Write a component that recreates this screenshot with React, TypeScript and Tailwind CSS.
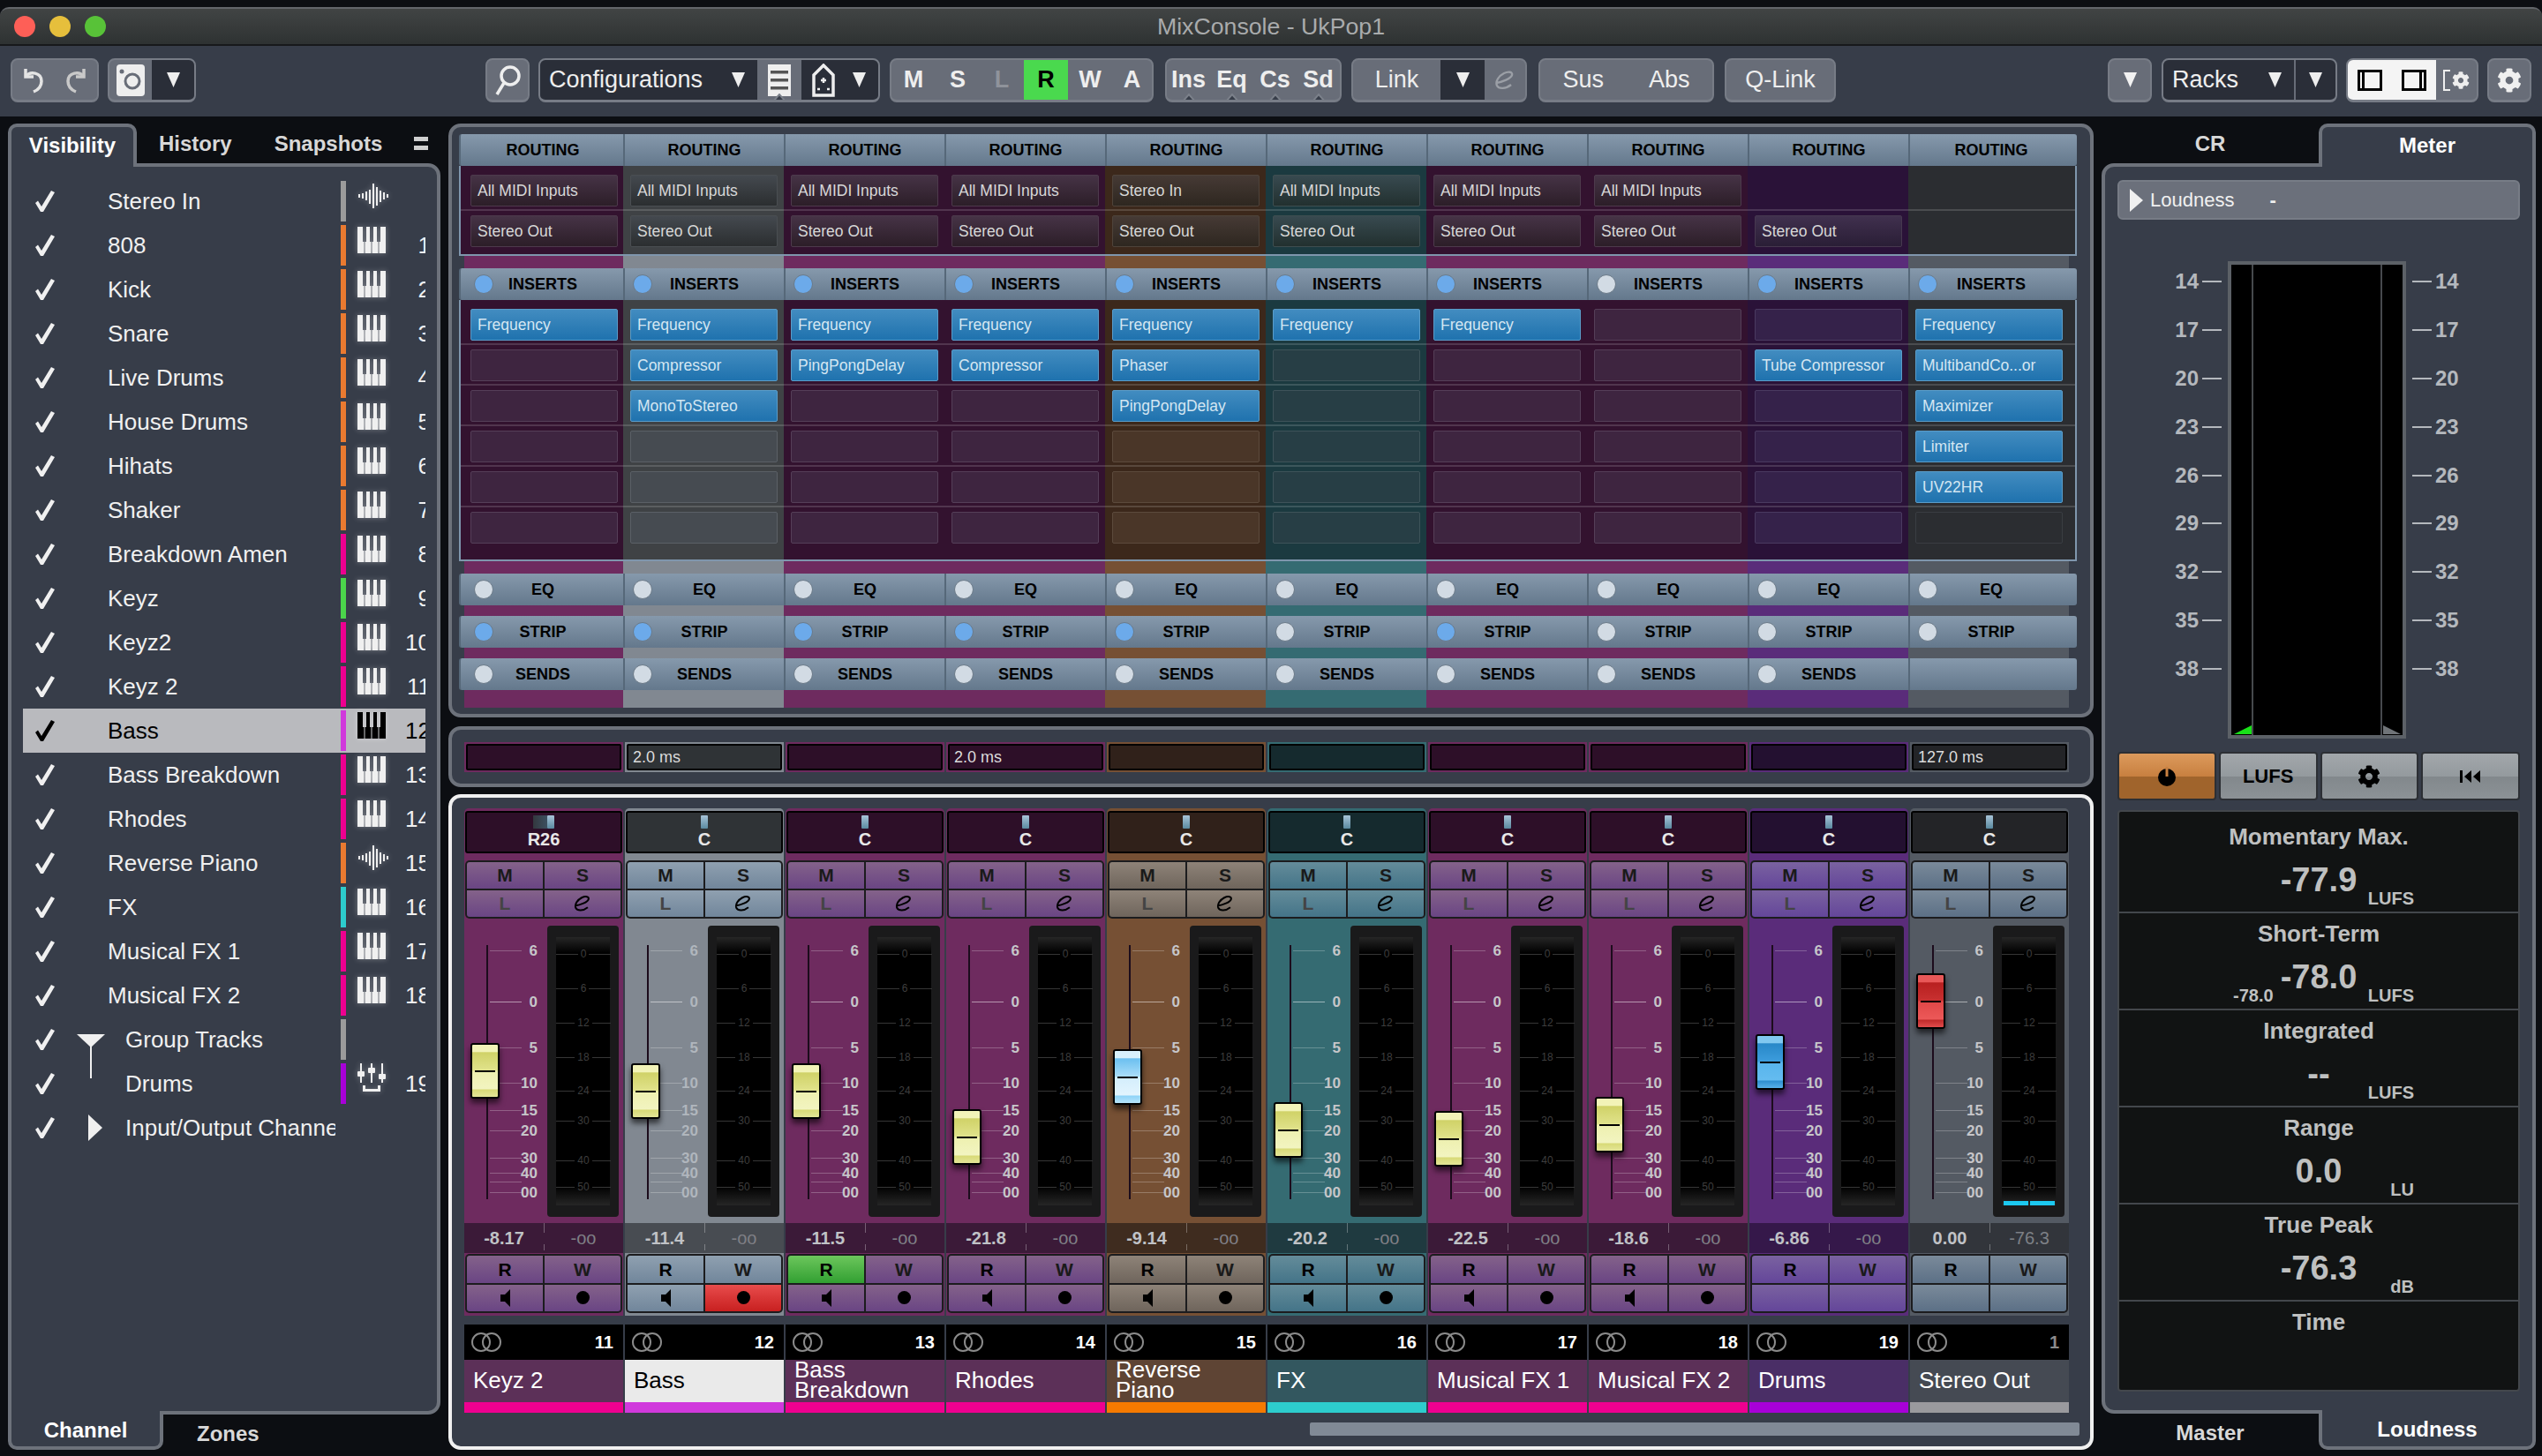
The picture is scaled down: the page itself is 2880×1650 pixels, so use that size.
import React from 'react';
import { FaCog } from 'react-icons/fa';

// Colour sets for the channel strips
interface Theme {
  bright: string;
  dark: string;
  box: string;
  val: string;
  name: string;
  btn: string;
  slot: string;
  routing: string;
  bar: string;
}

const pink: Theme = {
  bright: 'bg-[#6e2b5f]',
  dark: 'bg-[#33122f]',
  box: 'bg-[#2d0f28]',
  val: 'bg-[#3b1a38]',
  name: 'bg-[#5c3058] text-white',
  btn: 'bg-[linear-gradient(180deg,#84628a,#6a4584)]',
  slot: 'bg-[#3e2540] border-[#553f58]',
  routing: 'bg-[linear-gradient(180deg,#463346,#2c1e28)] border-[#4d3a4c]',
  bar: 'bg-[#ee0090]',
};
const selected: Theme = {
  bright: 'bg-[#818891]',
  dark: 'bg-[#3f4245]',
  box: 'bg-[#2f3336]',
  val: 'bg-[#484c52]',
  name: 'bg-[#eaeaea] text-black',
  btn: 'bg-[linear-gradient(180deg,#8fa0b0,#71869b)]',
  slot: 'bg-[#464b51] border-[#5b6066]',
  routing: 'bg-[linear-gradient(180deg,#44494f,#2b2e30)] border-[#4a4e52]',
  bar: 'bg-[#d039dc]',
};
const orange: Theme = {
  bright: 'bg-[#765034]',
  dark: 'bg-[#3c281b]',
  box: 'bg-[#30211a]',
  val: 'bg-[#3f2c1f]',
  name: 'bg-[#5e4434] text-white',
  btn: 'bg-[linear-gradient(180deg,#8e8378,#6f655c)]',
  slot: 'bg-[#4a3628] border-[#5c4a3c]',
  routing: 'bg-[linear-gradient(180deg,#463a35,#2e2720)] border-[#4e433a]',
  bar: 'bg-[#f57a00]',
};
const teal: Theme = {
  bright: 'bg-[#356b72]',
  dark: 'bg-[#1b3a40]',
  box: 'bg-[#152a2e]',
  val: 'bg-[#1f3a40]',
  name: 'bg-[#33575f] text-white',
  btn: 'bg-[linear-gradient(180deg,#648c9a,#447488)]',
  slot: 'bg-[#273e45] border-[#3e5359]',
  routing: 'bg-[linear-gradient(180deg,#384a50,#22302f)] border-[#3e4e50]',
  bar: 'bg-[#2dcdcd]',
};
const purple: Theme = {
  bright: 'bg-[#5a2c7a]',
  dark: 'bg-[#2a1238]',
  box: 'bg-[#231030]',
  val: 'bg-[#35184a]',
  name: 'bg-[#4a2e66] text-white',
  btn: 'bg-[linear-gradient(180deg,#7a62a0,#64469a)]',
  slot: 'bg-[#35224a] border-[#4a3a60]',
  routing: 'bg-[linear-gradient(180deg,#40304e,#2a1e36)] border-[#46384f]',
  bar: 'bg-[#a800d8]',
};
const slate: Theme = {
  bright: 'bg-[#545a63]',
  dark: 'bg-[#2b2d31]',
  box: 'bg-[#232427]',
  val: 'bg-[#32353b]',
  name: 'bg-[#454a53] text-white',
  btn: 'bg-[linear-gradient(180deg,#7a8a9a,#5c7086)]',
  slot: 'bg-[#2b2d31] border-[#3a3d42]',
  routing: 'bg-[linear-gradient(180deg,#3a3d42,#26282b)] border-[#3f4246]',
  bar: 'bg-[#9a9a9e]',
};

interface Channel {
  theme: Theme;
  name: string;
  num: number;
  pan: string;
  level: string;
  peak: string;
  capTop: number;
  cap: 'yellow' | 'ice' | 'blue' | 'red';
  input: string;
  output: string;
  inserts: string[];
  insertsOn: boolean;
  stripOn: boolean;
  latency: string;
}

const channels: Channel[] = [
  { theme: pink, name: 'Keyz 2', num: 11, pan: 'R26', level: '-8.17', peak: '-oo', capTop: 141, cap: 'yellow', input: 'All MIDI Inputs', output: 'Stereo Out', inserts: ['Frequency'], insertsOn: true, stripOn: true, latency: '' },
  { theme: selected, name: 'Bass', num: 12, pan: 'C', level: '-11.4', peak: '-oo', capTop: 164, cap: 'yellow', input: 'All MIDI Inputs', output: 'Stereo Out', inserts: ['Frequency', 'Compressor', 'MonoToStereo'], insertsOn: true, stripOn: true, latency: '2.0 ms' },
  { theme: pink, name: 'Bass Breakdown', num: 13, pan: 'C', level: '-11.5', peak: '-oo', capTop: 164, cap: 'yellow', input: 'All MIDI Inputs', output: 'Stereo Out', inserts: ['Frequency', 'PingPongDelay'], insertsOn: true, stripOn: true, latency: '' },
  { theme: pink, name: 'Rhodes', num: 14, pan: 'C', level: '-21.8', peak: '-oo', capTop: 216, cap: 'yellow', input: 'All MIDI Inputs', output: 'Stereo Out', inserts: ['Frequency', 'Compressor'], insertsOn: true, stripOn: true, latency: '2.0 ms' },
  { theme: orange, name: 'Reverse Piano', num: 15, pan: 'C', level: '-9.14', peak: '-oo', capTop: 148, cap: 'ice', input: 'Stereo In', output: 'Stereo Out', inserts: ['Frequency', 'Phaser', 'PingPongDelay'], insertsOn: true, stripOn: true, latency: '' },
  { theme: teal, name: 'FX', num: 16, pan: 'C', level: '-20.2', peak: '-oo', capTop: 208, cap: 'yellow', input: 'All MIDI Inputs', output: 'Stereo Out', inserts: ['Frequency'], insertsOn: true, stripOn: false, latency: '' },
  { theme: pink, name: 'Musical FX 1', num: 17, pan: 'C', level: '-22.5', peak: '-oo', capTop: 218, cap: 'yellow', input: 'All MIDI Inputs', output: 'Stereo Out', inserts: ['Frequency'], insertsOn: true, stripOn: true, latency: '' },
  { theme: pink, name: 'Musical FX 2', num: 18, pan: 'C', level: '-18.6', peak: '-oo', capTop: 202, cap: 'yellow', input: 'All MIDI Inputs', output: 'Stereo Out', inserts: [], insertsOn: false, stripOn: false, latency: '' },
  { theme: purple, name: 'Drums', num: 19, pan: 'C', level: '-6.86', peak: '-oo', capTop: 131, cap: 'blue', input: '', output: 'Stereo Out', inserts: ['', 'Tube Compressor'], insertsOn: true, stripOn: false, latency: '' },
  { theme: slate, name: 'Stereo Out', num: 1, pan: 'C', level: '0.00', peak: '-76.3', capTop: 62, cap: 'red', input: '', output: '', inserts: ['Frequency', 'MultibandCo...or', 'Maximizer', 'Limiter', 'UV22HR'], insertsOn: true, stripOn: false, latency: '127.0 ms' },
];

const capStyles = {
  yellow: 'bg-[linear-gradient(180deg,#f2f3b8_0%,#f2f3b8_13%,#d0d268_15%,#e0e28a_48%,#eef0b0_52%,#f2f4c0_84%,#d8da78_87%,#e4e698_100%)]',
  ice: 'bg-[linear-gradient(180deg,#d8f0fc_0%,#d8f0fc_13%,#6cc0f0_15%,#a8dcf8_48%,#d4eefc_52%,#e2f4fe_84%,#90d4f8_87%,#b8e4fa_100%)]',
  blue: 'bg-[linear-gradient(180deg,#80c8f0_0%,#80c8f0_13%,#2888c8_15%,#3c9cdc_48%,#58b4ec_52%,#64bcf0_84%,#3090d0_87%,#58b0e8_100%)]',
  red: 'bg-[linear-gradient(180deg,#e85858_0%,#e85858_13%,#b82020_15%,#c83030_48%,#e04848_52%,#ec5858_84%,#c02c2c_87%,#e04c4c_100%)]',
};

const faderScale = [
  { y: 36, label: '6' },
  { y: 94, label: '0' },
  { y: 146, label: '5' },
  { y: 186, label: '10' },
  { y: 217, label: '15' },
  { y: 240, label: '20' },
  { y: 271, label: '30' },
  { y: 288, label: '40' },
  { y: 298, label: '' },
  { y: 310, label: '00' },
];

const meterScale = [
  { y: 32, label: '0' },
  { y: 71, label: '6' },
  { y: 110, label: '12' },
  { y: 149, label: '18' },
  { y: 187, label: '24' },
  { y: 221, label: '30' },
  { y: 266, label: '40' },
  { y: 296, label: '50' },
];

type IconKind = 'wave' | 'piano' | 'mixer' | 'none';

interface ListRow {
  name: string;
  bar?: string;
  icon: IconKind;
  num?: string;
  depth?: number;
  tri?: 'open' | 'closed';
  active?: boolean;
}

const listRows: ListRow[] = [
  { name: 'Stereo In', bar: 'bg-[#9b9b9b]', icon: 'wave' },
  { name: '808', bar: 'bg-[#ea7a30]', icon: 'piano', num: '1' },
  { name: 'Kick', bar: 'bg-[#ea7a30]', icon: 'piano', num: '2' },
  { name: 'Snare', bar: 'bg-[#ea7a30]', icon: 'piano', num: '3' },
  { name: 'Live Drums', bar: 'bg-[#ea7a30]', icon: 'piano', num: '4' },
  { name: 'House Drums', bar: 'bg-[#ea7a30]', icon: 'piano', num: '5' },
  { name: 'Hihats', bar: 'bg-[#ea7a30]', icon: 'piano', num: '6' },
  { name: 'Shaker', bar: 'bg-[#ea7a30]', icon: 'piano', num: '7' },
  { name: 'Breakdown Amen', bar: 'bg-[#ee0090]', icon: 'piano', num: '8' },
  { name: 'Keyz', bar: 'bg-[#4bd44b]', icon: 'piano', num: '9' },
  { name: 'Keyz2', bar: 'bg-[#ee0090]', icon: 'piano', num: '10' },
  { name: 'Keyz 2', bar: 'bg-[#ee0090]', icon: 'piano', num: '11' },
  { name: 'Bass', bar: 'bg-[#d039dc]', icon: 'piano', num: '12', active: true },
  { name: 'Bass Breakdown', bar: 'bg-[#ee0090]', icon: 'piano', num: '13' },
  { name: 'Rhodes', bar: 'bg-[#ee0090]', icon: 'piano', num: '14' },
  { name: 'Reverse Piano', bar: 'bg-[#ea7a30]', icon: 'wave', num: '15' },
  { name: 'FX', bar: 'bg-[#2dcdcd]', icon: 'piano', num: '16' },
  { name: 'Musical FX 1', bar: 'bg-[#ee0090]', icon: 'piano', num: '17' },
  { name: 'Musical FX 2', bar: 'bg-[#ee0090]', icon: 'piano', num: '18' },
  { name: 'Group Tracks', bar: 'bg-[#9b9b9b]', icon: 'none', depth: 1, tri: 'open' },
  { name: 'Drums', bar: 'bg-[#a800d8]', icon: 'mixer', num: '19', depth: 1 },
  { name: 'Input/Output Channels', icon: 'none', depth: 1, tri: 'closed' },
];

// Icons
const TriDown = ({ className = 'text-[#eee]' }: { className?: string }) => (
  <svg className={className} width="15" height="17" viewBox="0 0 15 17" fill="currentColor">
    <polygon points="0,0 15,0 7.5,17" />
  </svg>
);

const EIcon = ({ className, w = 26, h = 22 }: { className?: string; w?: number; h?: number }) => (
  <svg className={className} width={w} height={h} viewBox="0 0 26 22" fill="none" stroke="currentColor" strokeWidth="2.4">
    <path d="M3 14 C10 13 20 9 21 5 C22 1.5 17 0.5 12 3 C6 6 2 12 4 17 C6 21 14 21 20 16" />
  </svg>
);

const Notch = () => (
  <svg className="absolute bottom-[-2px]" width="14" height="9" viewBox="0 0 14 9" fill="#373d49" stroke="#7b808a" strokeWidth="2">
    <polyline points="0,9 7,1 14,9" />
  </svg>
);

const PianoIcon = () => (
  <svg className="drop-shadow-[0_0_3px_rgba(255,255,255,0.35)]" width="32" height="30" viewBox="0 0 32 30" fill="currentColor">
    <rect x="0" y="0" width="6" height="17" />
    <rect x="10" y="0" width="4" height="17" />
    <rect x="18" y="0" width="4" height="17" />
    <rect x="26" y="0" width="6" height="17" />
    <rect x="0" y="17" width="7.5" height="13" />
    <rect x="8.5" y="17" width="7" height="13" />
    <rect x="16.5" y="17" width="7" height="13" />
    <rect x="24.5" y="17" width="7.5" height="13" />
  </svg>
);

const WaveIcon = () => (
  <svg className="drop-shadow-[0_0_3px_rgba(255,255,255,0.35)]" width="38" height="30" viewBox="0 0 38 30" stroke="currentColor" strokeWidth="2">
    <line x1="2" y1="13" x2="2" y2="17" />
    <line x1="6" y1="12" x2="6" y2="18" />
    <line x1="10" y1="10" x2="10" y2="20" />
    <line x1="14" y1="8" x2="14" y2="24" />
    <line x1="18" y1="1" x2="18" y2="29" />
    <line x1="22" y1="5" x2="22" y2="26" />
    <line x1="26" y1="9" x2="26" y2="22" />
    <line x1="30" y1="11" x2="30" y2="19" />
    <line x1="34" y1="13" x2="34" y2="17" />
  </svg>
);

const MixerIcon = () => (
  <svg className="drop-shadow-[0_0_3px_rgba(255,255,255,0.35)]" width="32" height="34" viewBox="0 0 32 34" fill="currentColor">
    <rect x="3" y="0" width="2" height="22" />
    <rect x="15" y="0" width="2" height="22" />
    <rect x="27" y="0" width="2" height="22" />
    <rect x="0" y="9" width="8" height="6" rx="1" />
    <rect x="12" y="5" width="8" height="6" rx="1" />
    <rect x="24" y="12" width="8" height="6" rx="1" />
    <path d="M6 25h3v4h14v-4h3v7H6z" />
  </svg>
);

const Check = ({ className }: { className: string }) => (
  <svg className={className} width="22" height="24" viewBox="0 0 22 24" fill="currentColor">
    <polygon points="0,14 3,11.5 7,18 18,0 22,2 9,24 6,24" />
  </svg>
);

const StereoCircles = () => (
  <svg width="36" height="24" viewBox="0 0 36 24" fill="none" stroke="#8b8b8b" strokeWidth="2">
    <circle cx="12" cy="12" r="10" />
    <circle cx="24" cy="12" r="10" />
  </svg>
);

const Speaker = () => (
  <svg width="11" height="20" viewBox="0 0 11 20" fill="#000">
    <polygon points="0,6 5,6 11,0 11,20 5,14 0,14" />
  </svg>
);

const RecDot = () => <div className="h-[15px] w-[15px] rounded-full bg-black" />;

// Toolbar pieces
const ToolGroup = ({ className = '', children }: { className?: string; children: React.ReactNode }) => (
  <div className={`flex h-[50px] overflow-hidden rounded-lg border-2 border-b-[3px] border-[#777c86] bg-[#686d78] text-[27px] text-[#eee] ${className}`}>
    {children}
  </div>
);

const ToolCell = ({ className = '', between, children }: { className?: string; between?: boolean; children?: React.ReactNode }) => (
  <div className={`relative flex h-full items-center ${between ? 'justify-between' : 'justify-center'} ${className}`}>{children}</div>
);

const TitleBar = () => (
  <div className="relative flex h-[44px] items-center justify-center rounded-t-[10px] border-t-2 border-b-2 border-t-[#63666a] border-b-[#17191b] bg-[linear-gradient(180deg,#414444,#2e3232)]">
    <div className="absolute left-[16px] flex gap-[16px]">
      <div className="h-[24px] w-[24px] rounded-full bg-[#fe5f57]" />
      <div className="h-[24px] w-[24px] rounded-full bg-[#e6bf3c]" />
      <div className="h-[24px] w-[24px] rounded-full bg-[#58c238]" />
    </div>
    <span className="text-[26.7px] text-[#a9abac]">MixConsole - UkPop1</span>
  </div>
);

const Toolbar = () => (
  <div className="flex h-[80px] items-start bg-[#373d49] pl-[12px] pr-[12px] pt-[14px]">
    <ToolGroup className="w-[100px]">
      <ToolCell className="w-1/2">
        <svg width="26" height="32" viewBox="0 0 26 32" fill="none" stroke="#e4e4e4" strokeWidth="3.5">
          <path d="M4 3v9h9" />
          <path d="M4 12 C9 5 22 7 22 17 C22 23 18 27 13 29" />
        </svg>
      </ToolCell>
      <ToolCell className="w-1/2">
        <svg width="26" height="32" viewBox="0 0 26 32" fill="none" stroke="#c9c9c9" strokeWidth="3.5">
          <path d="M22 3v9h-9" />
          <path d="M22 12 C17 5 4 7 4 17 C4 23 8 27 13 29" />
        </svg>
      </ToolCell>
    </ToolGroup>
    <ToolGroup className="ml-[10px] w-[100px]">
      <ToolCell className="w-1/2">
        <svg width="32" height="36" viewBox="0 0 32 36">
          <rect x="0" y="0" width="32" height="36" rx="4" fill="#eee" />
          <circle cx="18" cy="19" r="8" fill="none" stroke="#686d78" strokeWidth="3" />
          <circle cx="6" cy="8" r="2.5" fill="#686d78" />
        </svg>
      </ToolCell>
      <ToolCell className="w-1/2 bg-[#2a2e38]"><TriDown /></ToolCell>
    </ToolGroup>
    <ToolGroup className="ml-[328px] w-[50px]">
      <ToolCell className="w-full">
        <svg width="30" height="36" viewBox="0 0 30 36" fill="none" stroke="#eee" strokeWidth="3.5">
          <circle cx="18" cy="13" r="10" />
          <line x1="11" y1="21" x2="3" y2="34" />
        </svg>
      </ToolCell>
    </ToolGroup>
    <ToolGroup className="ml-[10px] w-[387px]">
      <ToolCell between className="w-[246px] bg-[#2a2e38] pl-[10px] pr-[14px]">
        <span>Configurations</span>
        <TriDown />
      </ToolCell>
      <ToolCell className="w-[50px]">
        <svg width="26" height="36" viewBox="0 0 26 36">
          <rect width="26" height="36" fill="#eee" />
          <rect x="3" y="7" width="20" height="3.5" fill="#555" />
          <rect x="3" y="16" width="20" height="3.5" fill="#555" />
          <rect x="3" y="25" width="20" height="3.5" fill="#555" />
        </svg>
        <Notch />
      </ToolCell>
      <ToolCell between className="flex-1 bg-[#2a2e38] pl-[12px] pr-[14px]">
        <svg width="26" height="38" viewBox="0 0 26 38" fill="none" stroke="#eee" strokeWidth="3.5">
          <path d="M13 2 L24 13 V36 H2 V13 Z" />
          <path d="M10 19h6M13 16v6M6 29h3M17 29h3" strokeWidth="2.5" />
        </svg>
        <TriDown />
      </ToolCell>
    </ToolGroup>
    <ToolGroup className="ml-[11px] w-[299px] font-bold">
      <ToolCell className="w-[50px]">M</ToolCell>
      <ToolCell className="w-[50px]">S</ToolCell>
      <ToolCell className="w-[50px] text-[#8f939b]">L</ToolCell>
      <ToolCell className="w-[50px] bg-[#4ad94e] text-black">R</ToolCell>
      <ToolCell className="w-[50px]">W</ToolCell>
      <ToolCell className="flex-1">A</ToolCell>
    </ToolGroup>
    <ToolGroup className="ml-[13px] w-[200px] font-bold">
      {['Ins', 'Eq', 'Cs', 'Sd'].map((t) => (
        <ToolCell key={t} className="w-1/4">
          {t}
          <Notch />
        </ToolCell>
      ))}
    </ToolGroup>
    <ToolGroup className="ml-[11px] w-[199px]">
      <ToolCell className="w-[99px]">Link</ToolCell>
      <ToolCell className="w-[50px] bg-[#2a2e38]"><TriDown /></ToolCell>
      <ToolCell className="flex-1"><EIcon className="text-[#9b9fa6]" /></ToolCell>
    </ToolGroup>
    <ToolGroup className="ml-[13px] w-[199px]">
      <ToolCell className="w-1/2">Sus</ToolCell>
      <ToolCell className="w-1/2">Abs</ToolCell>
    </ToolGroup>
    <ToolGroup className="ml-[12px] w-[126px]">
      <ToolCell className="w-full">Q-Link</ToolCell>
    </ToolGroup>
    <ToolGroup className="ml-auto w-[50px]">
      <ToolCell className="w-full"><TriDown className="text-[#f2f2f2]" /></ToolCell>
    </ToolGroup>
    <ToolGroup className="ml-[11px] w-[199px]">
      <ToolCell between className="w-[148px] bg-[#2a2e38] pl-[10px] pr-[14px]">
        <span>Racks</span>
        <TriDown />
      </ToolCell>
      <ToolCell className="flex-1 border-l-2 border-[#686d78] bg-[#2a2e38]"><TriDown /></ToolCell>
    </ToolGroup>
    <ToolGroup className="ml-[10px] w-[150px]">
      <ToolCell className="w-[50px] bg-[#f4f4f4]">
        <svg width="28" height="24" viewBox="0 0 28 24">
          <rect x="1.5" y="1.5" width="25" height="21" fill="none" stroke="#000" strokeWidth="3" />
          <rect x="5" y="3" width="3" height="18" fill="#000" />
        </svg>
      </ToolCell>
      <ToolCell className="w-[50px] bg-[#f4f4f4]">
        <svg width="28" height="24" viewBox="0 0 28 24">
          <rect x="1.5" y="1.5" width="25" height="21" fill="none" stroke="#000" strokeWidth="3" />
          <rect x="20" y="3" width="3" height="18" fill="#000" />
        </svg>
      </ToolCell>
      <ToolCell className="flex-1 gap-[1px] text-[#eee]">
        <svg width="9" height="24" viewBox="0 0 9 24" fill="none" stroke="currentColor" strokeWidth="2">
          <path d="M8 1H1v22h7" />
        </svg>
        <FaCog className="h-[20px] w-[20px]" />
      </ToolCell>
    </ToolGroup>
    <ToolGroup className="ml-[10px] w-[50px]">
      <ToolCell className="w-full"><FaCog className="h-[28px] w-[28px] text-[#f0f0f0]" /></ToolCell>
    </ToolGroup>
  </div>
);

// Left zone
const ChannelRow = ({ row }: { row: ListRow }) => {
  const indent = row.depth ? 'w-[80px]' : 'w-[60px]';
  const nameWidth = row.depth ? 'w-[238px]' : 'w-[258px]';
  return (
    <div className={`flex h-[50px] w-[456px] items-center text-[26px] ${row.active ? 'bg-[#b9babe] text-black' : 'text-[#f0f0f0]'}`}>
      <Check className="ml-[14px] shrink-0" />
      <div className={`relative flex h-full shrink-0 items-center ${indent}`}>
        {row.tri === 'open' && (
          <svg className="absolute left-[25px] top-[19px]" width="32" height="50" viewBox="0 0 32 50" fill="#f0f0f0">
            <polygon points="0,0 32,0 16,15" />
            <rect x="15" y="12" width="2" height="38" />
          </svg>
        )}
        {row.tri === 'closed' && (
          <svg className="ml-[38px]" width="16" height="30" viewBox="0 0 16 30" fill="#f0f0f0">
            <polygon points="0,0 16,15 0,30" />
          </svg>
        )}
      </div>
      <div className={`shrink-0 overflow-hidden whitespace-nowrap ${nameWidth}`}>{row.name}</div>
      <div className={`ml-[6px] h-[46px] w-[6px] shrink-0 ${row.bar ?? ''}`} />
      <div className="-mt-[12px] ml-[13px] flex w-[38px] shrink-0 items-center justify-start">
        {row.icon === 'piano' && <PianoIcon />}
        {row.icon === 'wave' && <WaveIcon />}
        {row.icon === 'mixer' && <MixerIcon />}
      </div>
      <div className="ml-[16px] w-[23px] shrink-0 overflow-hidden">
        <div className="w-[29px] text-right">{row.num}</div>
      </div>
    </div>
  );
};

const LeftZone = () => (
  <div className="flex w-[490px] shrink-0 flex-col">
    <div className="flex h-[45px] items-center text-[24px] font-bold text-[#d8d8d8]">
      <div className="relative z-10 -mb-[4px] flex h-[49px] w-[146px] items-center justify-center rounded-t-[10px] border-x-4 border-t-4 border-[#6d727b] bg-[#373d49] pb-[4px] text-white">
        Visibility
      </div>
      <span className="ml-[25px]">History</span>
      <span className="ml-[48px]">Snapshots</span>
      <div className="ml-[36px] flex flex-col gap-[5px]">
        <div className="h-[5px] w-[16px] bg-[#cfcfcf]" />
        <div className="h-[5px] w-[16px] bg-[#cfcfcf]" />
      </div>
    </div>
    <div className="h-[1418px] rounded-tr-[14px] rounded-br-[14px] border-4 border-[#6d727b] bg-[#373d49] pl-[13px] pt-[14px]">
      {listRows.map((row) => (
        <ChannelRow key={row.name} row={row} />
      ))}
    </div>
    <div className="flex h-[40px] items-center pt-[3px] text-[24px] font-bold">
      <div className="relative z-10 -mt-[7px] flex h-[44px] w-[176px] items-center justify-center rounded-b-[10px] border-x-4 border-b-4 border-[#6d727b] bg-[#373d49] pt-[3px] text-white">
        Channel
      </div>
      <span className="ml-[38px] text-[#d8d8d8]">Zones</span>
    </div>
  </div>
);

// Rack part of the mixer
const RackHeader = ({ label, dot, first, last }: { label: string; dot?: 'on' | 'off'; first?: boolean; last?: boolean }) => (
  <div className={`relative flex h-[36px] items-center justify-center border-l-2 border-[#566879] bg-[linear-gradient(180deg,#8699ac,#64788c)] text-[18px] font-bold text-black ${first ? 'rounded-l-[3px] border-l-0 pl-[2px]' : ''} ${last ? 'rounded-r-[3px] pr-[5px]' : ''}`}>
    {dot && (
      <div className={`absolute top-[7px] h-[22px] w-[22px] rounded-full border border-[#6b7a88] ${first ? 'left-[15px]' : 'left-[9px]'} ${dot === 'on' ? 'bg-[#6caaea]' : 'bg-[#d2dbe4]'}`} />
    )}
    {label}
  </div>
);

const Slot = ({ text, theme, routing, first }: { text: string; theme: Theme; routing?: boolean; first?: boolean }) => {
  const margin = first ? 'ml-[11px]' : 'ml-[8px]';
  if (!text && routing) return <div className={`h-[36px] w-[167px] ${margin}`} />;
  if (!text) return <div className={`h-[36px] w-[167px] rounded-[2px] border ${theme.slot} ${margin}`} />;
  if (routing) {
    return (
      <div className={`flex h-[36px] w-[167px] items-center overflow-hidden whitespace-nowrap rounded-[2px] border pl-[7px] text-[17.5px] text-[#d8d8d8] ${theme.routing} ${margin}`}>
        {text}
      </div>
    );
  }
  return (
    <div className={`flex h-[36px] w-[167px] items-center overflow-hidden whitespace-nowrap rounded-[2px] border border-[#5a9cc8] bg-[linear-gradient(180deg,#428cc0,#1f72ae)] pl-[7px] text-[17.5px] text-[#d4e6f2] ${margin}`}>
      {text}
    </div>
  );
};

const RackColumn = ({ ch, index }: { ch: Channel; index: number }) => {
  const first = index === 0;
  const last = index === channels.length - 1;
  const width = first ? 'w-[186px]' : last ? 'w-[191px]' : 'w-[182px]';
  const edges = `border-b-2 border-[#7f96ad] ${first ? 'border-l-2' : ''} ${last ? 'border-r-2' : ''}`;
  const brightInset = `${first ? 'ml-[6px]' : ''} ${last ? 'mr-[9px]' : ''} ${ch.theme.bright}`;
  const insertSlots = [0, 1, 2, 3, 4, 5];
  return (
    <div className={`flex shrink-0 flex-col ${width}`}>
      <RackHeader label="ROUTING" first={first} last={last} />
      <div className={`h-[102px] pt-[10px] ${ch.theme.dark} ${edges}`}>
        <Slot text={ch.input} theme={ch.theme} routing first={first} />
        <div className="mb-[5px] mt-[3px] h-[2px] bg-white/15" />
        <Slot text={ch.output} theme={ch.theme} routing first={first} />
      </div>
      <div className={`h-[14px] ${brightInset}`} />
      <RackHeader label="INSERTS" dot={ch.insertsOn ? 'on' : 'off'} first={first} last={last} />
      <div className={`h-[296px] pt-[10px] ${ch.theme.dark} ${edges}`}>
        {insertSlots.map((n) => (
          <div key={n}>
            <Slot text={ch.inserts[n] ?? ''} theme={ch.theme} first={first} />
            {n < 5 && <div className="mb-[5px] mt-[3px] h-[2px] bg-white/15" />}
          </div>
        ))}
      </div>
      <div className={`h-[14px] ${brightInset}`} />
      <RackHeader label="EQ" dot="off" first={first} last={last} />
      <div className={`h-[12px] ${brightInset}`} />
      <RackHeader label="STRIP" dot={ch.stripOn ? 'on' : 'off'} first={first} last={last} />
      <div className={`h-[12px] ${brightInset}`} />
      <RackHeader label={last ? '' : 'SENDS'} dot={last ? undefined : 'off'} first={first} last={last} />
      <div className={`h-[20px] ${brightInset}`} />
    </div>
  );
};

// Channel strip
const StripBtn = ({ bg, className = '', children }: { bg: string; className?: string; children?: React.ReactNode }) => (
  <div className={`flex items-center justify-center text-[21px] font-bold text-[#1a1a1a] ${bg} ${className}`}>{children}</div>
);

const PanBar = ({ wide }: { wide: boolean }) =>
  wide ? (
    <div className="flex h-[15px] w-[24px]">
      <div className="w-[16px] bg-[linear-gradient(90deg,#33383e,#3c5060)]" />
      <div className="w-[8px] rounded-[1px] bg-[linear-gradient(180deg,#a8c4d8,#5a8aa0)]" />
    </div>
  ) : (
    <div className="h-[15px] w-[8px] rounded-[1px] bg-[linear-gradient(180deg,#a8c4d8,#5a8aa0)]" />
  );

const Strip = ({ ch, index }: { ch: Channel; index: number }) => {
  const t = ch.theme;
  const isSel = index === 1;
  const isLast = index === channels.length - 1;
  const noIcons = index >= 8;
  const labelColor = isSel ? 'text-[#b0b6bd]' : 'text-[#c6c6c9]';
  const nameLines = ch.name === 'Bass Breakdown' ? ['Bass', 'Breakdown'] : ch.name === 'Reverse Piano' ? ['Reverse', 'Piano'] : [ch.name];
  return (
    <div className="flex w-[180px] shrink-0 flex-col">
      <div className={`rounded-t-[5px] pt-[3px] ${t.bright}`}>
        <div className={`mx-[1px] flex h-[48px] flex-col items-center rounded-[3px] border-2 border-black pt-[3px] ${t.box}`}>
          <PanBar wide={ch.pan !== 'C'} />
          <span className="mt-[2px] text-[20px] font-bold leading-[20px] text-[#e8e8e8]">{ch.pan}</span>
        </div>
        <div className="mx-[1px] mt-[8px] grid h-[66px] grid-cols-2 grid-rows-2 gap-[2px] rounded-[5px] bg-[#1c1c1e] p-[2px]">
          <StripBtn bg={t.btn} className="rounded-tl-[3px]">M</StripBtn>
          <StripBtn bg={t.btn} className="rounded-tr-[3px]">S</StripBtn>
          <StripBtn bg={t.btn} className="rounded-bl-[3px] text-[#444]">L</StripBtn>
          <StripBtn bg={t.btn} className="rounded-br-[3px]"><EIcon className="text-black" w={22} h={20} /></StripBtn>
        </div>
        <div className="flex h-[345px]">
          <div className="relative h-full w-[94px] shrink-0">
            <div className="absolute left-[25px] top-[30px] h-[288px] w-[2px] bg-[#1c0c1c]" />
            {faderScale.map((s) => (
              <React.Fragment key={s.y}>
                <div className={`absolute left-[29px] h-px w-[36px] ${s.label === '0' ? 'bg-white/50' : 'bg-white/25'}`} style={{ top: s.y }} />
                {s.label && (
                  <span className={`absolute left-[48px] w-[35px] text-right text-[17px] font-bold leading-[16px] ${labelColor}`} style={{ top: s.y - 7 }}>
                    {s.label}
                  </span>
                )}
              </React.Fragment>
            ))}
            <div
              className={`absolute left-[7px] h-[63px] w-[33px] rounded-[3px] border-2 border-black shadow-[0_5px_6px_rgba(0,0,0,0.6)] ${capStyles[ch.cap]}`}
              style={{ top: ch.capTop }}
            >
              <div className="absolute left-[3px] right-[3px] top-[29px] h-[2px] bg-black" />
            </div>
          </div>
          <div className="relative mt-[8px] h-[330px] w-[81px] shrink-0 rounded-[4px] bg-[#1a1a1b] px-[10px] pt-[13px]">
            <div className="flex h-[304px] flex-col justify-between bg-black">
              <div className="h-[18px] bg-[linear-gradient(180deg,#262626,#000)]" />
              <div className="h-[22px] bg-[linear-gradient(180deg,#000,#262626)]" />
            </div>
            {meterScale.map((m) => (
              <div key={m.y} className="absolute left-[10px] flex w-[62px] items-center gap-[3px]" style={{ top: m.y - 8 }}>
                <div className="h-px flex-1 bg-[#363636]" />
                <span className="text-[12px] leading-[16px] text-[#3e3e3e]">{m.label}</span>
                <div className="h-px flex-1 bg-[#363636]" />
              </div>
            ))}
            {isLast && (
              <div className="absolute bottom-[13px] left-[12px] flex gap-[2px]">
                <div className="h-[5px] w-[28px] bg-[#1cc8f0]" />
                <div className="h-[5px] w-[28px] bg-[#1cc8f0]" />
              </div>
            )}
          </div>
        </div>
        <div className={`relative grid h-[34px] grid-cols-2 items-center text-center text-[20px] ${t.val}`}>
          <span className="font-bold text-[#c0c2c6]">{ch.level}</span>
          <span className={isLast ? 'text-[#7d8086]' : 'text-[#7f7f85]'}>{ch.peak}</span>
          <div className="absolute left-1/2 top-0 h-[11px] w-px bg-white/30" />
          <div className="absolute bottom-[3px] left-1/2 h-[7px] w-px bg-white/30" />
        </div>
        <div className="rounded-b-[7px] px-[1px] pb-[3px] pt-[1px]">
          <div className="grid h-[67px] grid-cols-2 grid-rows-2 gap-[2px] rounded-[5px] bg-[#1c1c1e] p-[2px]">
            <StripBtn bg={index === 2 ? 'bg-[linear-gradient(180deg,#6cc65c,#32a032)]' : t.btn} className="rounded-tl-[3px] text-black">R</StripBtn>
            <StripBtn bg={t.btn} className="rounded-tr-[3px]">W</StripBtn>
            <StripBtn bg={t.btn} className="rounded-bl-[3px]">{!noIcons && <Speaker />}</StripBtn>
            <StripBtn bg={index === 1 ? 'bg-[linear-gradient(180deg,#e84c4c,#c82020)]' : t.btn} className="rounded-br-[3px]">
              {!noIcons && <RecDot />}
            </StripBtn>
          </div>
        </div>
      </div>
      <div className="mt-[10px] flex h-[40px] items-center justify-between bg-black pl-[7px] pr-[11px]">
        <StereoCircles />
        <span className={`text-[20px] font-bold ${isLast ? 'text-[#8b8b8b]' : 'text-white'}`}>{ch.num}</span>
      </div>
      <div className={`flex h-[48px] flex-col justify-center pb-[2px] pl-[10px] text-[26px] leading-[23px] ${t.name}`}>
        {nameLines.map((l) => (
          <div key={l}>{l}</div>
        ))}
      </div>
      <div className={`h-[12px] ${t.bar}`} />
    </div>
  );
};

const MixerZone = () => (
  <div className="flex w-[1864px] shrink-0 flex-col">
    <div className="flex h-[673px] rounded-[14px] border-4 border-[#6d727b] bg-[#373d49] pl-[8px] pt-[8px]">
      {channels.map((ch, i) => (
        <RackColumn key={ch.name} ch={ch} index={i} />
      ))}
    </div>
    <div className="mt-[10px] flex h-[69px] gap-[2px] rounded-[14px] border-4 border-[#6d727b] bg-[#373d49] pl-[14px] pt-[14px]">
      {channels.map((ch) => (
        <div key={ch.name} className={`h-[34px] w-[180px] shrink-0 p-[2px] ${ch.theme.bright}`}>
          <div className={`flex h-full items-center rounded-[2px] border-2 border-black pl-[5px] text-[18px] text-[#dcdcdc] ${ch.theme.box}`}>
            {ch.latency}
          </div>
        </div>
      ))}
    </div>
    <div className="mt-[8px] h-[743px] rounded-[14px] border-4 border-[#f0f0f0] bg-[#373d49] pl-[14px] pt-[12px]">
      <div className="flex gap-[2px]">
        {channels.map((ch, i) => (
          <Strip key={ch.name} ch={ch} index={i} />
        ))}
      </div>
      <div className="ml-[958px] mt-[11px] h-[15px] w-[872px] rounded-[2px] bg-[#818a96]" />
    </div>
  </div>
);

// Right zone
const meterLabels = ['14', '17', '20', '23', '26', '29', '32', '35', '38'];

const LoudRow = ({ label, value, unit, min, first }: { label: string; value?: string; unit?: string; min?: string; first?: boolean }) => (
  <div className={`relative flex flex-col items-center border-b-2 border-[#43474c] text-[#bfc0c0] ${first ? 'h-[115px] pt-[13px]' : 'h-[110px] pt-[8px]'}`}>
    <span className="text-[26px] font-bold leading-[30px]">{label}</span>
    {value && <span className="mt-[12px] text-[38px] font-bold leading-[44px]">{value}</span>}
    {min && <span className="absolute bottom-[5px] left-[129px] text-[20px] font-bold leading-[20px]">{min}</span>}
    {unit && <span className="absolute bottom-[5px] right-[118px] text-[20px] font-bold leading-[20px]">{unit}</span>}
  </div>
);

const MeterBtn = ({ orange: isOrange, children }: { orange?: boolean; children: React.ReactNode }) => (
  <div className={`flex h-[55px] w-[112px] items-center justify-center rounded-[4px] border-2 border-[#2c2f34] text-[22px] font-bold text-black ${isOrange ? 'bg-[linear-gradient(180deg,#dc9a5c_0%,#c88040_50%,#a0642c_52%,#a0642c_100%)]' : 'bg-[linear-gradient(180deg,#a2a7ab_0%,#949a9e_50%,#82888c_52%,#8c9296_100%)]'}`}>
    {children}
  </div>
);

const RightZone = () => (
  <div className="flex w-[492px] shrink-0 flex-col">
    <div className="flex h-[45px] items-center text-[24px] font-bold">
      <span className="w-[246px] text-center text-[#d8d8d8]">CR</span>
      <div className="relative z-10 -mb-[4px] flex h-[49px] flex-1 items-center justify-center rounded-t-[10px] border-x-4 border-t-4 border-[#6d727b] bg-[#373d49] pb-[4px] text-white">
        Meter
      </div>
    </div>
    <div className="h-[1417px] rounded-tl-[14px] rounded-bl-[14px] border-4 border-[#6d727b] bg-[#373d49] px-[14px] pt-[15px]">
      <div className="flex h-[45px] items-center rounded-[6px] border-2 border-[#777c86] bg-[#6b707b] pl-[12px] text-[22px] text-[#f0f0f0]">
        <svg width="15" height="26" viewBox="0 0 15 26" fill="#f0f0f0">
          <polygon points="0,0 15,13 0,26" />
        </svg>
        <span className="ml-[8px]">Loudness</span>
        <span className="ml-[40px] font-bold">-</span>
      </div>
      <div className="mt-[47px] flex h-[541px] justify-center pr-[4px]">
        <div className="-mt-[4px] flex flex-col">
          {meterLabels.map((l) => (
            <div key={l} className="flex h-[54.8px] items-center justify-end gap-[4px] text-[24px] font-bold text-[#b4b8bd]">
              {l}
              <div className="h-[2px] w-[22px] bg-[#b4b8bd]" />
            </div>
          ))}
        </div>
        <div className="relative mx-[7px] flex h-full w-[202px] border-4 border-[#5c6167] bg-black">
          <div className="h-full w-[25px] border-r-2 border-[#46494d]" />
          <div className="flex-1" />
          <div className="h-full w-[25px] border-l-2 border-[#46494d]" />
          <svg className="absolute bottom-[1px] left-[3px]" width="20" height="10" viewBox="0 0 20 10" fill="#19e019">
            <polygon points="0,10 20,0 20,10" />
          </svg>
          <svg className="absolute bottom-[1px] right-[2px]" width="20" height="10" viewBox="0 0 20 10" fill="#707478">
            <polygon points="0,0 20,10 0,10" />
          </svg>
        </div>
        <div className="-mt-[4px] flex flex-col">
          {meterLabels.map((l) => (
            <div key={l} className="flex h-[54.8px] items-center gap-[4px] text-[24px] font-bold text-[#b4b8bd]">
              <div className="h-[2px] w-[22px] bg-[#b4b8bd]" />
              {l}
            </div>
          ))}
        </div>
      </div>
      <div className="mt-[15px] flex gap-[3px]">
        <MeterBtn orange>
          <svg width="22" height="22" viewBox="0 0 22 22" fill="#000">
            <circle cx="11" cy="12" r="10" />
            <rect x="9.5" y="0" width="3" height="11" fill="#c88040" />
          </svg>
        </MeterBtn>
        <MeterBtn>LUFS</MeterBtn>
        <MeterBtn><FaCog className="h-[26px] w-[26px] text-black" /></MeterBtn>
        <MeterBtn>
          <svg width="24" height="14" viewBox="0 0 24 14" fill="#000">
            <rect x="0" y="0" width="3" height="14" />
            <polygon points="13,0 13,14 5,7" />
            <polygon points="23,0 23,14 15,7" />
          </svg>
        </MeterBtn>
      </div>
      <div className="mt-[11px] h-[659px] overflow-hidden rounded-[4px] border-2 border-[#43474c] bg-[#111313]">
        <LoudRow first label="Momentary Max." value="-77.9" unit="LUFS" />
        <LoudRow label="Short-Term" value="-78.0" unit="LUFS" min="-78.0" />
        <LoudRow label="Integrated" value="--" unit="LUFS" />
        <LoudRow label="Range" value="0.0" unit="LU" />
        <LoudRow label="True Peak" value="-76.3" unit="dB" />
        <div className="flex flex-col items-center pt-[8px] text-[#bfc0c0]">
          <span className="text-[26px] font-bold leading-[30px]">Time</span>
        </div>
      </div>
    </div>
    <div className="flex h-[41px] items-center pt-[3px] text-[24px] font-bold">
      <span className="w-[246px] text-center text-[#d8d8d8]">Master</span>
      <div className="relative z-10 -mt-[7px] flex h-[45px] flex-1 items-center justify-center rounded-b-[10px] border-x-4 border-b-4 border-[#6d727b] bg-[#373d49] pt-[3px] text-white">
        Loudness
      </div>
    </div>
  </div>
);

export default function App() {
  return (
    <div className="flex h-[1650px] w-[2880px] flex-col overflow-hidden bg-[#0c0e12] pt-[8px] font-['Liberation_Sans',Arial,sans-serif]">
      <TitleBar />
      <Toolbar />
      <div className="flex gap-[9px] pl-[9px] pt-[8px]">
        <LeftZone />
        <MixerZone />
        <RightZone />
      </div>
    </div>
  );
}
